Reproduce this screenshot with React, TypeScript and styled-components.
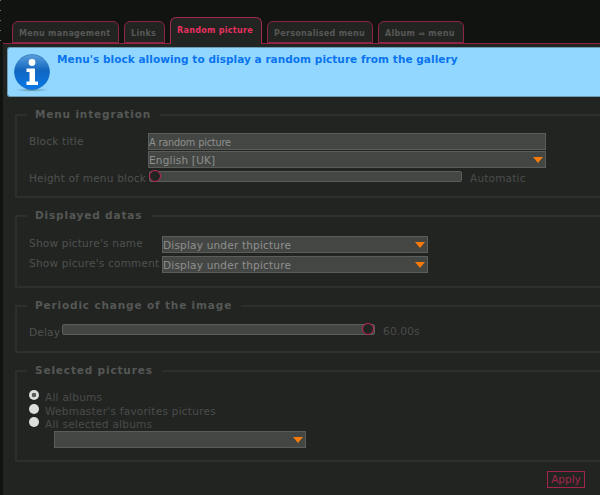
import React from "react";
import styled, { createGlobalStyle } from "styled-components";

const GlobalStyle = createGlobalStyle`
    html, body {
        margin: 0;
        padding: 0;
        background: #111311;
    }
`;

const Page = styled.div`
    width: 600px;
    height: 495px;
    overflow: hidden;
    background: #111311;
    font-family: "DejaVu Sans", sans-serif;
`;

const TabBar = styled.div`
    height: 43px;
    box-sizing: border-box;
    display: flex;
    align-items: flex-end;
    gap: 5px;
    padding-left: 12px;
`;

const Tab = styled.div<{ $active?: boolean; $w: number }>`
    width: ${(p) => p.$w}px;
    height: ${(p) => (p.$active ? 27 : 22)}px;
    margin-bottom: ${(p) => (p.$active ? -1 : 0)}px;
    box-sizing: border-box;
    position: relative;
    z-index: 1;
    border: 1px solid ${(p) => (p.$active ? "#a32a4c" : "#8f2444")};
    border-bottom: ${(p) => (p.$active ? "none" : "1px solid #8f2444")};
    border-radius: 6px 6px 0 0;
    background: #222422;
    color: ${(p) => (p.$active ? "#e8305f" : "#565856")};
    font-size: 8px;
    font-weight: bold;
    letter-spacing: 0.3px;
    white-space: nowrap;
    padding: ${(p) => (p.$active ? "8px" : "7px")} 0 0 6px;
`;

const Main = styled.div`
    margin-left: 3px;
    height: 452px;
    background: #222422;
    border-top: 1px solid #8f2444;
    box-sizing: border-box;
    position: relative;
`;

const InfoBox = styled.div`
    margin: 3px 0 0 4px;
    height: 50px;
    box-sizing: border-box;
    background: #92d7ff;
    border: 1px solid #6a9ab4;
    border-right: none;
    border-radius: 3px 0 0 3px;
    display: flex;
    padding: 6px 0 0 6px;
`;

const InfoIcon = styled.svg`
    width: 36px;
    height: 38px;
    flex: none;
`;

const InfoText = styled.div`
    margin: -1px 0 0 7px;
    color: #0a74ee;
    font-size: 10.5px;
    font-weight: bold;
    letter-spacing: 0.05px;
`;

const Content = styled.div`
    padding: 11px 0 0 12px;
    width: 620px;
    box-sizing: border-box;
`;

const Group = styled.fieldset<{ $h: number }>`
    margin: 0 0 11px;
    padding: 0;
    height: ${(p) => p.$h}px;
    box-sizing: border-box;
    border: 2px solid #2d2f2d;
    min-width: 0;
`;

const GroupTitle = styled.legend`
    margin-left: 10px;
    padding: 0 9px 0 8px;
    color: #555755;
    font-size: 10.5px;
    font-weight: bold;
    letter-spacing: 0.85px;
    line-height: 13px;
`;

const GroupBody = styled.div<{ $top: number }>`
    padding: ${(p) => p.$top}px 0 0 12px;
`;

const Label = styled.div<{ $w: number; $top?: number }>`
    width: ${(p) => p.$w}px;
    margin-top: ${(p) => p.$top ?? 0}px;
    flex: none;
    color: #4f514f;
    font-size: 10.5px;
    letter-spacing: 0.22px;
    white-space: nowrap;
`;

const Row = styled.div<{ $gap?: number }>`
    display: flex;
    align-items: flex-start;
    margin-bottom: ${(p) => p.$gap ?? 0}px;
`;

const Field = styled.div<{ $w: number; $narrow?: boolean }>`
    width: ${(p) => p.$w}px;
    height: 17px;
    flex: none;
    box-sizing: border-box;
    background: #444644;
    border: 1px solid #5b5d5b;
    color: #8e908e;
    font-size: ${(p) => (p.$narrow ? 9.8 : 10.5)}px;
    letter-spacing: ${(p) => (p.$narrow ? -0.2 : 0.2)}px;
    line-height: 15px;
    padding: 1px 0 0 0;
    position: relative;
    white-space: nowrap;
`;

const Arrow = styled.span`
    position: absolute;
    right: 2px;
    top: 5px;
    width: 0;
    height: 0;
    border-left: 5px solid transparent;
    border-right: 5px solid transparent;
    border-top: 6px solid #f47a0c;
`;

const Track = styled.div<{ $w: number }>`
    width: ${(p) => p.$w}px;
    height: 11px;
    flex: none;
    box-sizing: border-box;
    background: #444644;
    border: 1px solid #5b5d5b;
    border-radius: 2px;
    position: relative;
`;

const Knob = styled.span<{ $at: "start" | "end" }>`
    position: absolute;
    top: -2px;
    ${(p) => (p.$at === "start" ? "left: -1px;" : "right: 0;")}
    width: 12px;
    height: 12px;
    box-sizing: border-box;
    border-radius: 50%;
    background: #222422;
    border: 1px solid #c4264f;
`;

const SideValue = styled.div<{ $top: number }>`
    margin: ${(p) => p.$top}px 0 0 8px;
    color: #4a4c4a;
    font-size: 10.5px;
    letter-spacing: 0.2px;
    white-space: nowrap;
`;

const RadioRow = styled.div`
    display: flex;
    align-items: flex-start;
    height: 13.5px;
    color: #4a4c4a;
    font-size: 10.5px;
    letter-spacing: 0.26px;
    white-space: nowrap;
`;

const Radio = styled.span<{ $checked?: boolean }>`
    width: 10px;
    height: 10px;
    flex: none;
    margin: 0 6px 0 0;
    border-radius: 50%;
    background: ${(p) =>
        p.$checked
            ? "radial-gradient(circle, #5a5c5a 0 2px, #dcdedc 2.6px)"
            : "#dcdedc"};
`;

const RadioLabel = styled.span`
    margin-top: 1px;
`;

const Footer = styled.div`
    display: flex;
    justify-content: flex-end;
    width: 582px;
    margin-top: -2px;
`;

const ApplyButton = styled.button`
    width: 38px;
    height: 17px;
    box-sizing: border-box;
    padding: 0;
    background: transparent;
    border: 1px solid #a3264a;
    color: #a3264a;
    font-family: "DejaVu Sans", sans-serif;
    font-size: 10.5px;
    line-height: 15px;
`;

const Dots = styled.div`
    position: absolute;
    left: 0;
    top: 0;
    width: 1px;
    height: 50px;
    background: repeating-linear-gradient(to bottom, #777 0 1px, transparent 1px 10px);
`;

const InfoGlyph = () => (
    <InfoIcon viewBox="0 0 36 38">
        <defs>
            <linearGradient id="ball" x1="0" y1="0" x2="0" y2="1">
                <stop offset="0" stopColor="#5aa0dc" />
                <stop offset="0.45" stopColor="#1266c0" />
                <stop offset="1" stopColor="#0878e8" />
            </linearGradient>
            <radialGradient id="shade">
                <stop offset="0" stopColor="#4a6a80" stopOpacity="0.7" />
                <stop offset="1" stopColor="#4a6a80" stopOpacity="0" />
            </radialGradient>
        </defs>
        <ellipse cx="18" cy="36" rx="17" ry="1.8" fill="url(#shade)" />
        <circle cx="18" cy="18" r="17.5" fill="url(#ball)" stroke="#0b5cb0" strokeWidth="0.5" />
        <circle cx="18" cy="8.5" r="3.4" fill="#fff" />
        <path d="M12.5 14.5h8.5v13h3v3.5H12.5v-3.5h3v-9.5h-3z" fill="#fff" />
    </InfoIcon>
);

export default function App() {
    return (
        <Page>
            <GlobalStyle />
            <Dots />
            <TabBar>
                <Tab $w={107}>Menu management</Tab>
                <Tab $w={41}>Links</Tab>
                <Tab $w={92} $active>Random picture</Tab>
                <Tab $w={106}>Personalised menu</Tab>
                <Tab $w={86}>Album ⇒ menu</Tab>
            </TabBar>
            <Main>
                <InfoBox>
                    <InfoGlyph />
                    <InfoText>Menu's block allowing to display a random picture from the gallery</InfoText>
                </InfoBox>
                <Content>
                    <Group $h={90}>
                        <GroupTitle>Menu integration</GroupTitle>
                        <GroupBody $top={12}>
                            <Row $gap={1}>
                                <Label $w={119} $top={2}>Block title</Label>
                                <Field $w={398} $narrow>A random picture</Field>
                            </Row>
                            <Row $gap={3}>
                                <Label $w={119} />
                                <Field $w={398}>English [UK]<Arrow /></Field>
                            </Row>
                            <Row>
                                <Label $w={120} $top={1}>Height of menu block</Label>
                                <Track $w={313}><Knob $at="start" /></Track>
                                <SideValue $top={1}>Automatic</SideValue>
                            </Row>
                        </GroupBody>
                    </Group>
                    <Group $h={79}>
                        <GroupTitle>Displayed datas</GroupTitle>
                        <GroupBody $top={14}>
                            <Row $gap={3}>
                                <Label $w={133} $top={1}>Show picture's name</Label>
                                <Field $w={266}>Display under thpicture<Arrow /></Field>
                            </Row>
                            <Row>
                                <Label $w={133} $top={1}>Show picure's comment</Label>
                                <Field $w={266}>Display under thpicture<Arrow /></Field>
                            </Row>
                        </GroupBody>
                    </Group>
                    <Group $h={54}>
                        <GroupTitle>Periodic change of the image</GroupTitle>
                        <GroupBody $top={12}>
                            <Row>
                                <Label $w={33} $top={2}>Delay</Label>
                                <Track $w={313}><Knob $at="end" /></Track>
                                <SideValue $top={1}>60.00s</SideValue>
                            </Row>
                        </GroupBody>
                    </Group>
                    <Group $h={98}>
                        <GroupTitle>Selected pictures</GroupTitle>
                        <GroupBody $top={13}>
                            <RadioRow><Radio $checked /><RadioLabel>All albums</RadioLabel></RadioRow>
                            <RadioRow><Radio /><RadioLabel>Webmaster's favorites pictures</RadioLabel></RadioRow>
                            <RadioRow><Radio /><RadioLabel>All selected albums</RadioLabel></RadioRow>
                            <Row>
                                <Label $w={25} />
                                <Field $w={252}><Arrow /></Field>
                            </Row>
                        </GroupBody>
                    </Group>
                </Content>
                <Footer>
                    <ApplyButton>Apply</ApplyButton>
                </Footer>
            </Main>
        </Page>
    );
}
